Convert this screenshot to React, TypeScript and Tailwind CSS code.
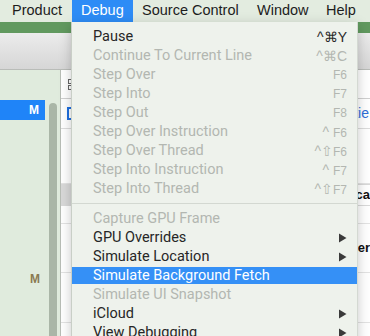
import React from "react";

type Item = {
  label: string;
  keys?: string;
  small?: boolean;
  disabled?: boolean;
  submenu?: boolean;
  active?: boolean;
  sep?: boolean;
};

const items: Item[] = [
  { label: "Pause", keys: "^⌘Y" },
  { label: "Continue To Current Line", keys: "^⌘C", disabled: true },
  { label: "Step Over", keys: "F6", small: true, disabled: true },
  { label: "Step Into", keys: "F7", small: true, disabled: true },
  { label: "Step Out", keys: "F8", small: true, disabled: true },
  { label: "Step Over Instruction", keys: "^ F6", small: true, disabled: true },
  { label: "Step Over Thread", keys: "^⇧F6", small: true, disabled: true },
  { label: "Step Into Instruction", keys: "^ F7", small: true, disabled: true },
  { label: "Step Into Thread", keys: "^⇧F7", small: true, disabled: true },
  { label: "", sep: true },
  { label: "Capture GPU Frame", disabled: true },
  { label: "GPU Overrides", submenu: true },
  { label: "Simulate Location", submenu: true },
  { label: "Simulate Background Fetch", active: true },
  { label: "Simulate UI Snapshot", disabled: true },
  { label: "iCloud", submenu: true },
  { label: "View Debugging", submenu: true },
];

const Arrow = () => (
  <svg width="9" height="10" viewBox="0 0 9 10" className="text-[#3a3a3a]">
    <path d="M1 0.5 L8.5 5 L1 9.5 Z" fill="currentColor" />
  </svg>
);

function Shortcut({ item }: { item: Item }) {
  if (!item.keys) return null;
  const color = item.disabled ? "text-[#b3b7b1]" : "text-[#2a2a2a]";
  if (item.small) {
    const m = item.keys.match(/^(.*?)(F\d)$/);
    const mods = m ? m[1] : "";
    const fk = m ? m[2] : item.keys;
    return (
      <span className={`flex items-baseline ${color}`}>
        {mods && <span className="text-[14px] leading-none">{mods.replace(" ", "")}</span>}
        {mods.includes(" ") && <span className="w-[4px]" />}
        <span className="text-[12px] leading-none">{fk}</span>
      </span>
    );
  }
  return <span className={`text-[14px] leading-none ${color}`}>{item.keys}</span>;
}

function DebugMenu() {
  return (
    <div className="absolute left-[72px] top-[22px] w-[285px] bg-[#eef2ec] pt-[5px] pb-[8px] shadow-[-1px_0_0_#c9cfc7,1px_0_0_#d4d9d2,0_4px_12px_rgba(0,0,0,0.25)]">
      {items.map((item, i) =>
        item.sep ? (
          <div key={i} className="flex h-[11px] items-center">
            <div className="h-px w-full bg-[#d3d8d1]" />
          </div>
        ) : (
          <div key={i} className="h-[19px] py-[1px]">
            <div
              className={`flex h-[17px] items-center justify-between pl-[21px] pr-[10px] ${
                item.active ? "bg-[#3590f6] text-white" : item.disabled ? "text-[#b3b7b1]" : "text-[#262626]"
              }`}
            >
              <span className="pt-[1px] text-[14.5px] leading-none" style={{ fontFamily: "Roboto, sans-serif" }}>
                {item.label}
              </span>
              {item.submenu ? <Arrow /> : <Shortcut item={item} />}
            </div>
          </div>
        )
      )}
    </div>
  );
}

function MenuBar() {
  return (
    <div className="flex h-[22px] items-center bg-[#e3ece0] pl-[3px] text-[14.5px] text-[#1d1d1d]">
      <div className="flex h-full w-[69px] items-center pl-[9px]">Product</div>
      <div className="flex h-full w-[61px] items-center bg-[#2d8cf6] pl-[9px] text-white">Debug</div>
      <div className="flex h-full w-[115px] items-center pl-[9px]">Source Control</div>
      <div className="flex h-full w-[69px] items-center pl-[9px]">Window</div>
      <div className="flex h-full w-[50px] items-center pl-[9px]">Help</div>
    </div>
  );
}

function Background() {
  return (
    <div className="flex flex-1 flex-col">
      <div className="h-[11px] bg-[#61995f]" />
      <div className="h-[37px] border-b border-[#b9bcb8] bg-gradient-to-b from-[#ececec] to-[#d6d6d6]" />
      <div className="flex flex-1">
        {/* sidebar */}
        <div className="relative w-[61px] border-r border-[#b8bdb6] bg-[#e0ebdd]">
          <div className="h-[30px]" />
          <div className="flex h-[20px] w-[45px] items-center justify-end bg-[#1f84f8] pr-[6px] text-[12px] font-bold text-white">
            M
          </div>
          <div className="absolute left-[49px] top-[33px] bottom-0 w-[8px] rounded-t-full bg-[#aab6a7]" />
          <div className="absolute left-[30px] top-[200px] text-[12px] font-bold text-[#8a7a52]">M</div>
        </div>
        {/* editor */}
        <div className="flex flex-1 flex-col bg-white">
          <div className="flex h-[29px] items-center border-b border-[#d0d0d0] pl-[7px]">
            <div className="grid grid-cols-1 gap-[1px]">
              <div className="h-[5px] w-[5px] border border-[#666]" />
              <div className="h-[5px] w-[5px] border border-[#666]" />
            </div>
          </div>
          <div className="flex h-[30px] items-center justify-between border-b border-[#dcdcdc] pl-[6px]">
            <div className="h-[13px] w-[10px] border-2 border-[#1f6fe0]" />
            <span className="pr-[1px] text-[14px] text-[#2f6ed8]">itie</span>
          </div>
          <div className="h-[55px] border-b border-[#e3e3e3]" />
          <div className="flex h-[22px] items-center justify-between bg-[#d9d9d9]">
            <span />
            <span className="bg-white pl-[1px] text-[13px] font-bold text-[#111]">ca</span>
          </div>
          <div className="h-[18px] border-b border-[#e3e3e3]" />
          <div className="flex h-[48px] items-center justify-end">
            <span className="text-[13px] font-bold text-[#111]">er</span>
          </div>
          <div className="h-[50px] border-t border-[#e3e3e3]" />
          <div className="flex-1 border-t border-[#e3e3e3]" />
        </div>
      </div>
    </div>
  );
}

export default function App() {
  return (
    <div
      className="relative flex h-[336px] w-[370px] flex-col overflow-hidden"
      style={{ fontFamily: '"Liberation Sans", Arial, sans-serif' }}
    >
      <MenuBar />
      <Background />
      <DebugMenu />
    </div>
  );
}
